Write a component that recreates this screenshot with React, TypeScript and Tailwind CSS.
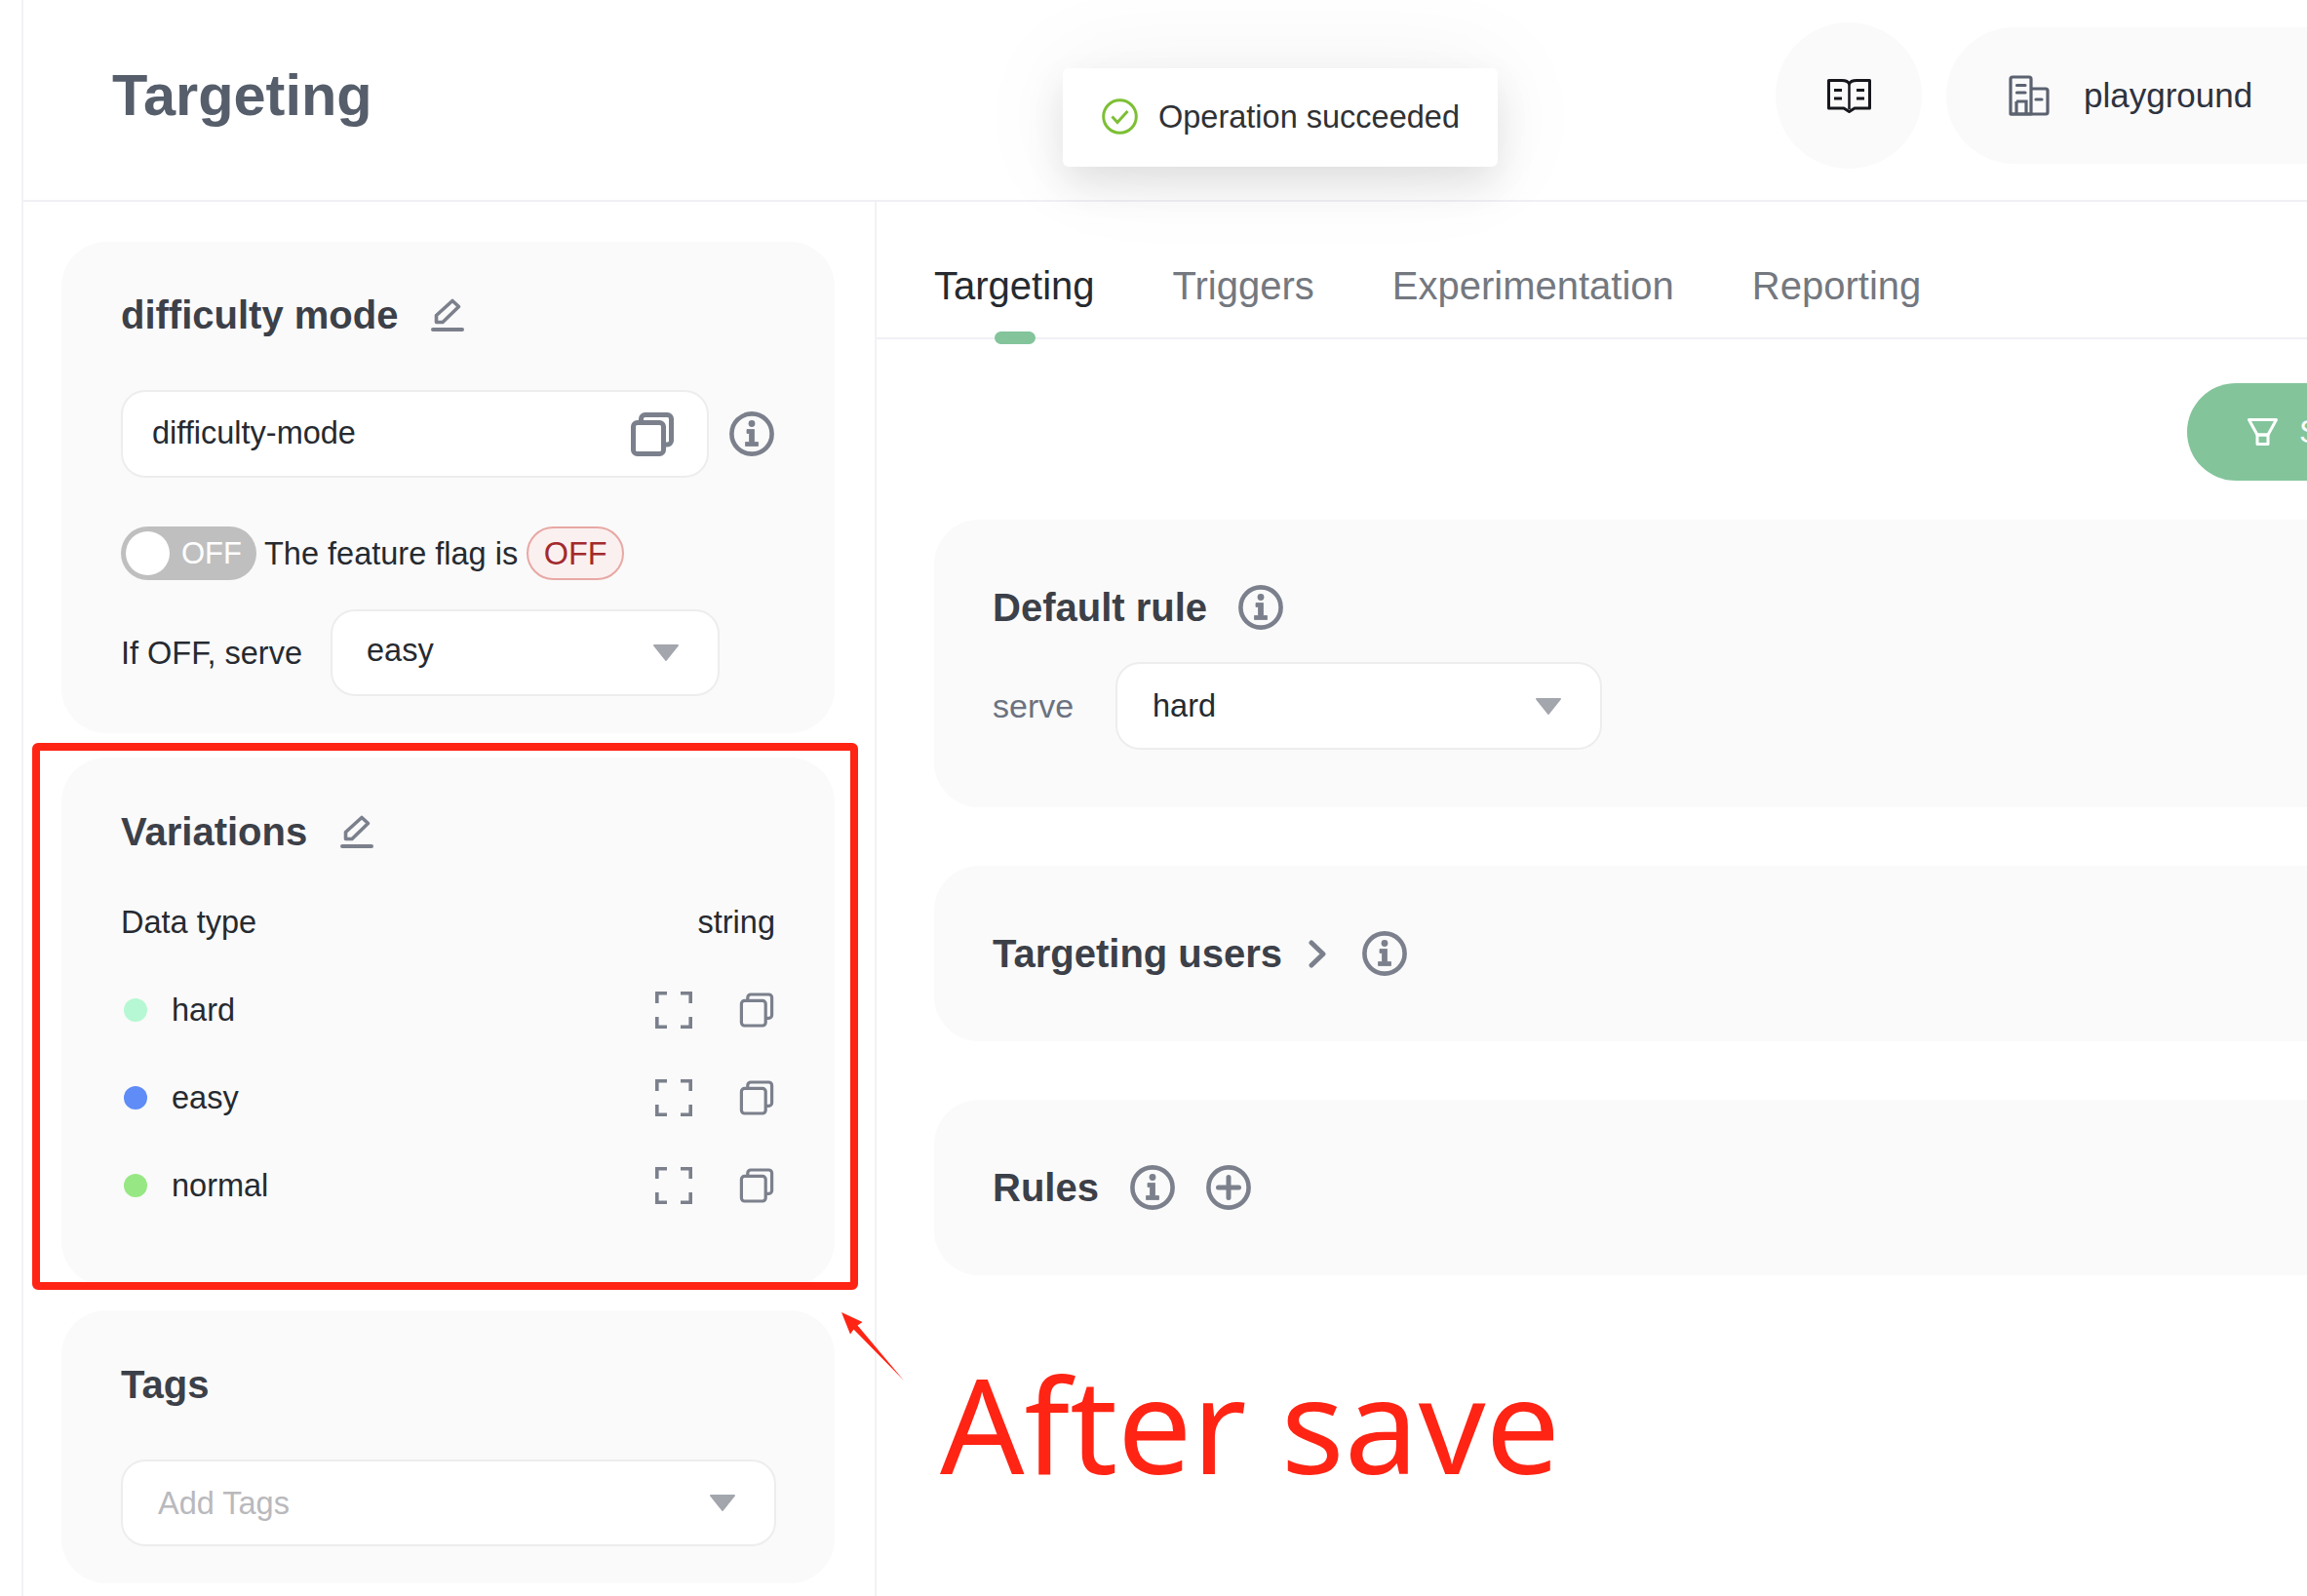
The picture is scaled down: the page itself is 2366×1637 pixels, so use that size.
const sans = "font-['Liberation_Sans',Arial,sans-serif]";
const gray = "#7b808c";

function Info({ className = "" }: { className?: string }) {
  return (
    <svg viewBox="0 0 46 46" className={`w-[46px] h-[46px] shrink-0 ${className}`} fill="none">
      <circle cx="23" cy="23" r="20.6" stroke={gray} strokeWidth="4.6" />
      <circle cx="23" cy="12.5" r="3.4" fill={gray} />
      <path d="M18 18.5H25.5V31.5H29.5V35.5H16.5V31.5H20.5V22.5H18Z" fill={gray} stroke={gray} strokeWidth="0.8" strokeLinejoin="round" />
    </svg>
  );
}
function Plus() {
  return (
    <svg viewBox="0 0 46 46" className="w-[46px] h-[46px] shrink-0" fill="none">
      <circle cx="23" cy="23" r="20.6" stroke={gray} strokeWidth="4.6" />
      <path d="M23 12.5V33.5M12.5 23H33.5" stroke={gray} strokeWidth="5" strokeLinecap="round" />
    </svg>
  );
}
function Copy({ className = "", sw = 5 }: { className?: string; sw?: number }) {
  return (
    <svg viewBox="0 0 44 45" className={`shrink-0 ${className}`} fill="none">
      <rect x="2.5" y="10.5" width="31" height="32" rx="4" stroke={gray} strokeWidth={sw} />
      <path d="M10.5 9V6.5a4 4 0 0 1 4-4H37.5a4 4 0 0 1 4 4V29a4 4 0 0 1-4 4H34" stroke={gray} strokeWidth={sw} />
    </svg>
  );
}
function Edit() {
  return (
    <svg viewBox="0 0 34 34" className="w-[34px] h-[34px] shrink-0" fill="none">
      <path d="M5.5 17.5L22 2.5L28.5 8.5L12 24.5H5.5Z" stroke={gray} strokeWidth="3.6" strokeLinejoin="round" />
      <path d="M2 32H32" stroke={gray} strokeWidth="4" strokeLinecap="round" />
    </svg>
  );
}
function Expand() {
  return (
    <svg viewBox="0 0 38 38" className="w-[38px] h-[38px] shrink-0" fill="none">
      <path d="M1.8 12V1.8H12M26 1.8H36.2V12M1.8 26V36.2H12M26 36.2H36.2V26" stroke={gray} strokeWidth="3.6" />
    </svg>
  );
}
function Caret() {
  return (
    <svg viewBox="0 0 28 19" className="w-[28px] h-[19px] shrink-0">
      <path d="M2 2H26L14 17Z" fill="#a3a6ad" stroke="#a3a6ad" strokeWidth="2" strokeLinejoin="round" />
    </svg>
  );
}
function Chevron() {
  return (
    <svg viewBox="0 0 18 29" className="w-[18px] h-[29px] shrink-0" fill="none">
      <path d="M3 3L15 14.5L3 26" stroke={gray} strokeWidth="5" strokeLinecap="round" strokeLinejoin="round" />
    </svg>
  );
}
function Book() {
  return (
    <svg viewBox="0 0 45 36" className="w-[45px] h-[36px]" fill="none">
      <path d="M1.5 2.5H15Q21 2.5 22.5 6Q24 2.5 30 2.5H43.5V31H28L22.5 34.5L17 31H1.5Z" stroke="#15171c" strokeWidth="3" strokeLinejoin="round" />
      <path d="M22.5 6V32" stroke="#15171c" strokeWidth="2.5" />
      <path d="M7 12.5H15M7 21H15M30 12.5H38M30 21H38" stroke="#15171c" strokeWidth="3" />
    </svg>
  );
}
function Building() {
  return (
    <svg viewBox="0 0 42 42" className="w-[42px] h-[42px] shrink-0" fill="none" stroke="#5b6270">
      <path d="M2 40V4a2 2 0 0 1 2-2H21a2 2 0 0 1 2 2V40Z" strokeWidth="3.2" strokeLinejoin="round" />
      <path d="M23 14H38a2 2 0 0 1 2 2V38a2 2 0 0 1-2 2H2" strokeWidth="3.2" strokeLinejoin="round" />
      <path d="M8 27H18V40M8 27V40" strokeWidth="3.2" />
      <path d="M8.5 10.5H17M8.5 18H17M28 25H34" strokeWidth="3.2" strokeLinecap="round" />
    </svg>
  );
}
function Filter() {
  return (
    <svg viewBox="0 0 31 28" className="w-[31px] h-[28px] shrink-0" fill="none" stroke="#fff" strokeWidth="3" strokeLinejoin="round">
      <path d="M1.5 1.5H29.5L21 17H10Z" />
      <path d="M10 17H21V26.5H10Z" />
    </svg>
  );
}
function Check() {
  return (
    <svg viewBox="0 0 37 37" className="w-[37px] h-[37px] shrink-0" fill="none" stroke="#7dbf35">
      <circle cx="18.5" cy="18.5" r="16.8" strokeWidth="3" />
      <path d="M10.5 18.5L16 24.5L26.5 13" strokeWidth="3" />
    </svg>
  );
}

function Select({ text, className, muted, raise }: { text: string; className: string; muted?: boolean; raise?: boolean }) {
  return (
    <div className={`flex items-center justify-between bg-white border-[2.5px] border-[#ededed] rounded-[25px] ${className}`}>
      <span className={`${muted ? "text-[#b9b9bd]" : "text-[#262a30]"} ${raise ? "mb-[5px]" : ""}`}>{text}</span>
      <Caret />
    </div>
  );
}

function CardTitle({ children }: { children: React.ReactNode }) {
  return <span className="text-[40px] leading-[46px] font-bold text-[#3c4048]">{children}</span>;
}

function Variation({ color, name }: { color: string; name: string }) {
  return (
    <div className="h-[60px] flex items-center">
      <span className={`w-[24px] h-[24px] rounded-full ml-[3px] ${color}`} />
      <span className="ml-[25px] text-[#262a30]">{name}</span>
      <div className="ml-auto flex items-center gap-[48px] pr-[1px]">
        <Expand />
        <Copy className="w-[36px] h-[36px]" sw={4} />
      </div>
    </div>
  );
}

function RuleCard({ children, className = "" }: { children: React.ReactNode; className?: string }) {
  return <div className={`bg-[#fafafa] rounded-[46px] pl-[60px] ${className}`}>{children}</div>;
}

export default function App() {
  return (
    <div className={`relative w-[2366px] h-[1637px] overflow-hidden bg-white pl-[22px] text-[32.5px] leading-[40px] ${sans}`}>
      <div className="h-full flex flex-col border-l-2 border-[#f2f2f5]">
        <header className="h-[207px] shrink-0 border-b-2 border-[#f0f0f5] flex items-center pl-[91px] pb-[9px]">
          <h1 className="text-[59.5px] leading-[70px] font-bold text-[#565e6b]">Targeting</h1>
          <div className="ml-auto flex items-center gap-[25px] -mr-[120px]">
            <div className="w-[150px] h-[150px] rounded-full bg-[#fafafa] flex items-center justify-center">
              <Book />
            </div>
            <div className="h-[140px] w-[490px] rounded-full bg-[#fafafa] flex items-center pl-[64px] gap-[35px]">
              <Building />
              <span className="text-[35px] text-[#2d3340]">playground</span>
            </div>
          </div>
        </header>

        <div className="flex-1 flex min-h-0">
          <aside className="w-[875px] shrink-0 border-r-2 border-[#f2f2f5] pl-[39px] pr-[41px] pt-[41px] flex flex-col gap-[25px]">
            <section className="bg-[#fafafa] rounded-[46px] h-[504px] px-[61px] pt-[52px]">
              <div className="flex items-center gap-[34px]">
                <CardTitle>difficulty mode</CardTitle>
                <Edit />
              </div>
              <div className="mt-[54px] flex items-center gap-[21px]">
                <div className="h-[90px] w-[603px] bg-white border-[2.5px] border-[#ededed] rounded-[25px] flex items-center pl-[30px] pr-[34px] justify-between">
                  <span className="text-[#262a30] mb-[2px]">difficulty-mode</span>
                  <Copy className="w-[44px] h-[45px]" />
                </div>
                <Info />
              </div>
              <div className="mt-[50px] h-[55px] flex items-center">
                <div className="w-[139px] h-[55px] rounded-full bg-[#bfbfbf] flex items-center pl-[5px]">
                  <span className="w-[45px] h-[45px] rounded-full bg-white" />
                  <span className="ml-[12px] text-white text-[31px]">OFF</span>
                </div>
                <span className="ml-[8px] text-[#262a30]">The feature flag is</span>
                <span className="ml-[9px] h-[55px] w-[100px] rounded-full border-2 border-[#e8a8a4] bg-[#fbf0f0] text-[#a22a2d] flex items-center justify-center">OFF</span>
              </div>
              <div className="mt-[30px] flex items-center">
                <span className="text-[#262a30] w-[215px]">If OFF, serve</span>
                <Select text="easy" raise className="h-[89px] w-[399px] pl-[35px] pr-[39px]" />
              </div>
            </section>

            <section className="bg-[#fafafa] rounded-[46px] h-[542px] px-[61px] pt-[53px]">
              <div className="flex items-center gap-[34px]">
                <CardTitle>Variations</CardTitle>
                <Edit />
              </div>
              <div className="mt-[39px] flex flex-col gap-[30px]">
                <div className="h-[61px] flex items-center justify-between text-[#262a30]">
                  <span>Data type</span>
                  <span>string</span>
                </div>
                <Variation color="bg-[#b6f8d3]" name="hard" />
                <Variation color="bg-[#5f8cf6]" name="easy" />
                <Variation color="bg-[#97e884]" name="normal" />
              </div>
            </section>

            <section className="bg-[#fafafa] rounded-[46px] h-[280px] pl-[61px] pr-[60px] pt-[53px]">
              <CardTitle>Tags</CardTitle>
              <Select text="Add Tags" muted className="mt-[54px] h-[89px] w-full pl-[36px] pr-[39px]" />
            </section>
          </aside>

          <main className="flex-1 min-w-0 flex flex-col">
            <nav className="h-[141px] shrink-0 border-b-2 border-[#f0f0f5] flex items-start gap-[80px] pl-[59px] pt-[63px] text-[40px] leading-[46px] text-[#74787f]">
              <span className="relative text-[#262a30]">
                Targeting
                <span className="absolute left-[62px] top-[70px] w-[42px] h-[13px] rounded-full bg-[#83c49b]" />
              </span>
              <span>Triggers</span>
              <span>Experimentation</span>
              <span>Reporting</span>
            </nav>

            <div className="pl-[59px] flex flex-col">
              <div className="mt-[45px] flex justify-end -mr-[100px]">
                <div className="w-[223px] h-[100px] rounded-full bg-[#83c49b] flex items-center pl-[62px] gap-[22px] text-white">
                  <Filter />
                  <span>Save</span>
                </div>
              </div>

              <div className="mt-[40px] flex flex-col gap-[60px] -mr-[60px]">
                <RuleCard className="h-[295px] pt-[67px]">
                  <div className="flex items-center gap-[32px] h-[46px]">
                    <CardTitle>Default rule</CardTitle>
                    <Info />
                  </div>
                  <div className="mt-[33px] flex items-center">
                    <span className="w-[126px] text-[34px] text-[#6b7280]">serve</span>
                    <Select text="hard" className="h-[90px] w-[499px] pl-[36px] pr-[39px]" />
                  </div>
                </RuleCard>
                <RuleCard className="h-[180px] flex items-center">
                  <CardTitle>Targeting users</CardTitle>
                  <span className="ml-[27px]"><Chevron /></span>
                  <span className="ml-[37px]"><Info /></span>
                </RuleCard>
                <RuleCard className="h-[180px] flex items-center gap-[32px]">
                  <CardTitle>Rules</CardTitle>
                  <Info />
                  <Plus />
                </RuleCard>
              </div>
            </div>
          </main>
        </div>
      </div>

      <div className="absolute left-[1090px] top-[70px] w-[446px] h-[101px] bg-white rounded-[6px] flex items-center pl-[40px] pb-[2px] gap-[21px] text-[#303133] shadow-[0_18px_40px_rgba(0,0,0,0.10),0_0_110px_rgba(0,0,0,0.06)]">
        <Check />
        <span>Operation succeeded</span>
      </div>

      <div className="absolute left-[33px] top-[762px] w-[847px] h-[561px] border-[8px] border-[#ff2414] rounded-[6px]" />
      <svg className="absolute left-[860px] top-[1343px] w-[70px] h-[75px]" viewBox="0 0 70 75">
        <polygon points="3,3 24.5,13 19.5,16.5 67,73 15.5,20.5 12,25.5" fill="#ff2414" />
      </svg>
      <div className="absolute left-[964px] top-[1365px] font-['Noto_Sans',sans-serif] text-[135.5px] leading-[190px] text-[#ff2414] whitespace-nowrap">After save</div>
    </div>
  );
}
